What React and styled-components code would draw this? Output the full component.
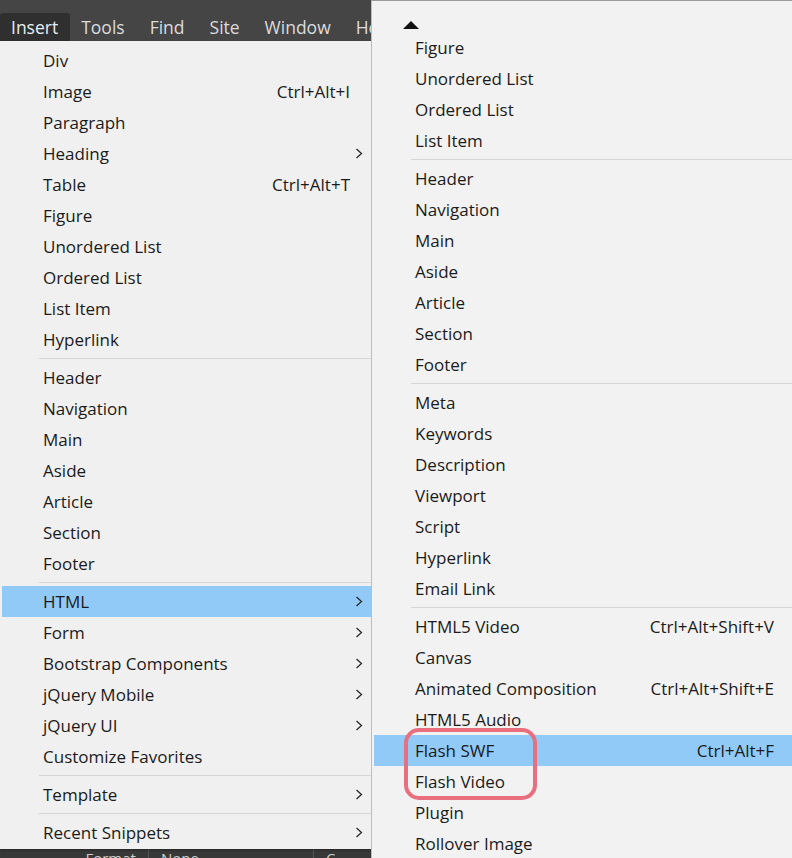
import React from 'react';
import styled, { createGlobalStyle } from 'styled-components';

const GlobalStyle = createGlobalStyle`
  html, body {
    margin: 0;
    padding: 0;
    background: #3c3c3c;
    overflow: hidden;
  }
  body {
    font-family: "Open Sans", "Noto Sans", sans-serif;
  }
`;

const leftItems = [
  { label: 'Div' },
  { label: 'Image', shortcut: 'Ctrl+Alt+I' },
  { label: 'Paragraph' },
  { label: 'Heading', sub: true },
  { label: 'Table', shortcut: 'Ctrl+Alt+T' },
  { label: 'Figure' },
  { label: 'Unordered List' },
  { label: 'Ordered List' },
  { label: 'List Item' },
  { label: 'Hyperlink' },
  { sep: true },
  { label: 'Header' },
  { label: 'Navigation' },
  { label: 'Main' },
  { label: 'Aside' },
  { label: 'Article' },
  { label: 'Section' },
  { label: 'Footer' },
  { sep: true },
  { label: 'HTML', sub: true, active: true },
  { label: 'Form', sub: true },
  { label: 'Bootstrap Components', sub: true },
  { label: 'jQuery Mobile', sub: true },
  { label: 'jQuery UI', sub: true },
  { label: 'Customize Favorites' },
  { sep: true },
  { label: 'Template', sub: true },
  { sep: true },
  { label: 'Recent Snippets', sub: true },
];

const rightItems = [
  { label: 'Figure' },
  { label: 'Unordered List' },
  { label: 'Ordered List' },
  { label: 'List Item' },
  { sep: true },
  { label: 'Header' },
  { label: 'Navigation' },
  { label: 'Main' },
  { label: 'Aside' },
  { label: 'Article' },
  { label: 'Section' },
  { label: 'Footer' },
  { sep: true },
  { label: 'Meta' },
  { label: 'Keywords' },
  { label: 'Description' },
  { label: 'Viewport' },
  { label: 'Script' },
  { label: 'Hyperlink' },
  { label: 'Email Link' },
  { sep: true },
  { label: 'HTML5 Video', shortcut: 'Ctrl+Alt+Shift+V' },
  { label: 'Canvas' },
  { label: 'Animated Composition', shortcut: 'Ctrl+Alt+Shift+E' },
  { label: 'HTML5 Audio' },
  { label: 'Flash SWF', shortcut: 'Ctrl+Alt+F', active: true },
  { label: 'Flash Video' },
  { label: 'Plugin' },
  { label: 'Rollover Image' },
];

const menuBarItems = ['Insert', 'Tools', 'Find', 'Site', 'Window', 'Help'];

const Screen = styled.div`
  display: flex;
  width: 792px;
  height: 858px;
  overflow: hidden;
  background: #3c3c3c;
`;

const LeftColumn = styled.div`
  width: 371px;
  flex-shrink: 0;
  display: flex;
  flex-direction: column;
  overflow: hidden;
`;

const MenuBar = styled.div`
  height: 41px;
  box-sizing: border-box;
  padding-top: 13px;
  background: #454545;
  display: flex;
  white-space: nowrap;
`;

const MenuBarItem = styled.div`
  padding: 0 12px 0 11px;
  margin-right: ${(props) => props.open ? 0 : 2}px;
  display: flex;
  align-items: center;
  font-size: 17.5px;
  color: ${(props) => props.open ? '#e6eef5' : '#dcdcdc'};
  background: ${(props) => props.open ? '#2f2f2f' : 'transparent'};
  border-radius: 3px 3px 0 0;
`;

const Dropdown = styled.div`
  background: #f0f0f0;
  padding: 4px 0 1px 2px;
  box-shadow: 0 1px 2px rgba(0, 0, 0, 0.35);
  position: relative;
  z-index: 1;
`;

const Row = styled.div`
  height: 31px;
  display: flex;
  align-items: center;
  padding-left: ${(props) => props.indent}px;
  padding-right: ${(props) => props.right}px;
  background: ${(props) => props.active ? '#91c9f7' : 'transparent'};
  color: #1b1b1b;
  font-size: 17px;
  white-space: nowrap;
`;

const Label = styled.span`
  flex: 1;
`;

const Shortcut = styled.span`
  color: #1b1b1b;
`;

const Chevron = styled.svg`
  width: 8px;
  height: 11px;
  margin-right: -13px;
  margin-left: 5px;
`;

const Separator = styled.div`
  height: 7px;
  display: flex;
  align-items: center;
  padding-left: ${(props) => props.indent}px;

  &::after {
    content: '';
    flex: 1;
    height: 1px;
    background: #d6d6d6;
  }
`;

const StatusStrip = styled.div`
  flex: 1;
  background: #383838;
  overflow: hidden;
  display: flex;
  align-items: flex-end;
  font-size: 15px;
  line-height: 18px;
  color: #cfcfcf;
`;

const StripCell = styled.div`
  padding: 0 12px;
  width: ${(props) => props.width}px;
  height: 9px;
  box-sizing: border-box;
  border-left: ${(props) => props.divider ? '1px solid #555' : 'none'};
  display: flex;
  align-items: flex-start;
  justify-content: space-between;
  overflow: hidden;
`;

const StripText = styled.span`
  display: block;
  height: 9px;
  overflow: hidden;
`;

const SubMenu = styled.div`
  flex: 1;
  position: relative;
  background: #f2f2f2;
  border-left: 1px solid #bdbdbd;
  border-top: 1px solid #9a9a9a;
  padding-left: 2px;
`;

const ScrollUp = styled.div`
  height: 31px;
  box-sizing: border-box;
  padding: 11px 0 0 29px;
`;

const Callout = styled.div`
  position: absolute;
  left: 32px;
  top: 727px;
  width: 133px;
  height: 72px;
  box-sizing: border-box;
  border: 4px solid #ea6f7e;
  border-radius: 15px;
`;

const MenuList = ({ items, indent, right, sepIndent }) => (
  <>
    {items.map((item, index) => item.sep ? (
      <Separator key={index} indent={sepIndent} />
    ) : (
      <Row key={index} indent={indent} right={right} active={item.active}>
        <Label>{item.label}</Label>
        {item.shortcut && <Shortcut>{item.shortcut}</Shortcut>}
        {item.sub && (
          <Chevron viewBox="0 0 8 11">
            <polyline points="1.5,1 6.5,5.5 1.5,10" fill="none" stroke="#2a2a2a" strokeWidth="1.3" />
          </Chevron>
        )}
      </Row>
    ))}
  </>
);

export default function App() {
  return (
    <>
      <GlobalStyle />
      <Screen>
        <LeftColumn>
          <MenuBar>
            {menuBarItems.map((name, index) => (
              <MenuBarItem key={name} open={index === 0}>{name}</MenuBarItem>
            ))}
          </MenuBar>
          <Dropdown>
            <MenuList items={leftItems} indent={41} right={21} sepIndent={37} />
          </Dropdown>
          <StatusStrip>
            <StripCell width={155}>
              <span />
              <StripText>Format</StripText>
            </StripCell>
            <StripCell width={173} divider>
              <StripText>None</StripText>
              <StripText>⌄</StripText>
            </StripCell>
            <StripCell width={60} divider>
              <StripText>C</StripText>
            </StripCell>
          </StatusStrip>
        </LeftColumn>
        <SubMenu>
          <ScrollUp>
            <svg width="16" height="8" viewBox="0 0 16 8">
              <polygon points="0,8 8,0 16,8" fill="#111" />
            </svg>
          </ScrollUp>
          <MenuList items={rightItems} indent={41} right={18} sepIndent={37} />
          <Callout />
        </SubMenu>
      </Screen>
    </>
  );
}
